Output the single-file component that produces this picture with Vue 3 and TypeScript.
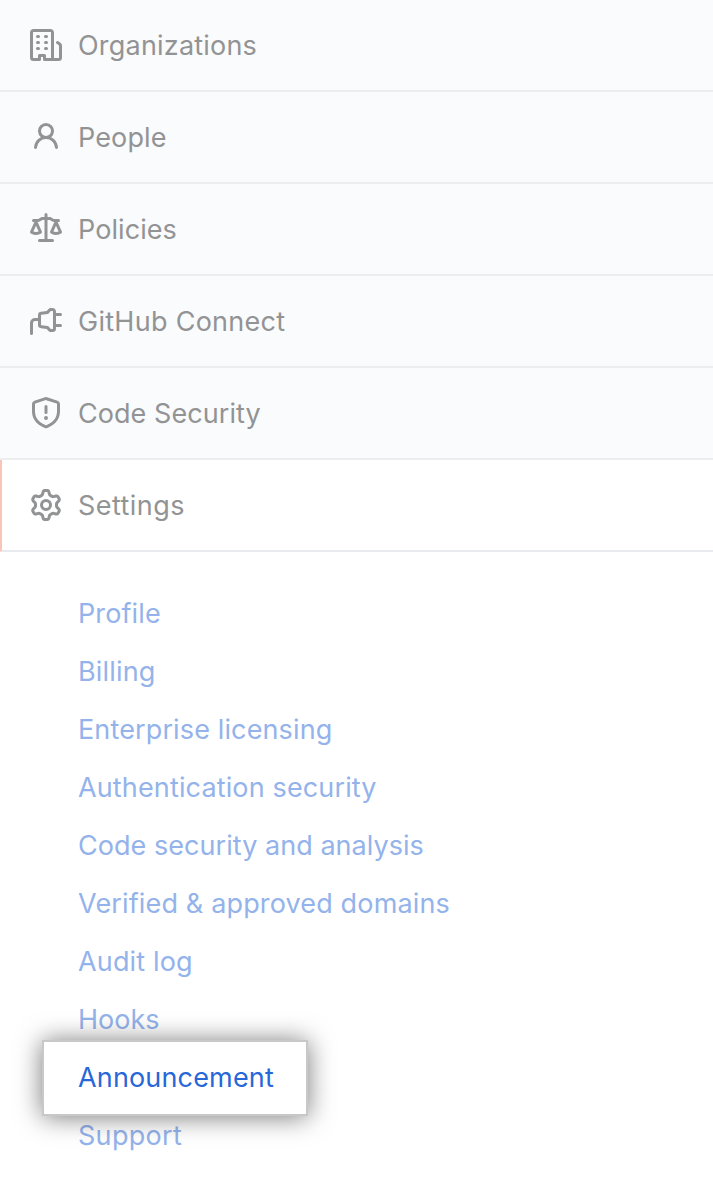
<script setup lang="ts">
interface NavItem {
  label: string
  icon: string
  tracking: number
  active?: boolean
}

interface SubItem {
  label: string
  tracking: number
  highlighted?: boolean
}

const items: NavItem[] = [
  {
    label: 'Organizations',
    tracking: 0.2,
    icon: 'M1.75 16A1.75 1.75 0 0 1 0 14.25V1.75C0 .784.784 0 1.75 0h8.5C11.216 0 12 .784 12 1.75v12.5c0 .085-.006.168-.018.25h2.268a.25.25 0 0 0 .25-.25V8.285a.25.25 0 0 0-.111-.208l-1.055-.703a.749.749 0 1 1 .832-1.248l1.055.703c.487.325.779.871.779 1.456v5.965A1.75 1.75 0 0 1 14.25 16h-3.5a.766.766 0 0 1-.197-.026c-.099.017-.2.026-.303.026h-3a.75.75 0 0 1-.75-.75V14h-1v1.25a.75.75 0 0 1-.75.75Zm-.25-1.75c0 .138.112.25.25.25H4v-1.25a.75.75 0 0 1 .75-.75h2.5a.75.75 0 0 1 .75.75v1.25h2.25a.25.25 0 0 0 .25-.25V1.75a.25.25 0 0 0-.25-.25h-8.5a.25.25 0 0 0-.25.25ZM3.75 6h.5a.75.75 0 0 1 0 1.5h-.5a.75.75 0 0 1 0-1.5ZM3 3.75A.75.75 0 0 1 3.75 3h.5a.75.75 0 0 1 0 1.5h-.5A.75.75 0 0 1 3 3.75Zm4 3A.75.75 0 0 1 7.75 6h.5a.75.75 0 0 1 0 1.5h-.5A.75.75 0 0 1 7 6.75ZM7.75 3h.5a.75.75 0 0 1 0 1.5h-.5a.75.75 0 0 1 0-1.5ZM3 9.75A.75.75 0 0 1 3.75 9h.5a.75.75 0 0 1 0 1.5h-.5A.75.75 0 0 1 3 9.75ZM7.75 9h.5a.75.75 0 0 1 0 1.5h-.5a.75.75 0 0 1 0-1.5Z',
  },
  {
    label: 'People',
    tracking: 0.12,
    icon: 'M10.561 8.073a6.005 6.005 0 0 1 3.432 5.142.75.75 0 1 1-1.498.07 4.5 4.5 0 0 0-8.99 0 .75.75 0 0 1-1.498-.07 6.004 6.004 0 0 1 3.431-5.142 3.999 3.999 0 1 1 5.123 0ZM10.5 5a2.5 2.5 0 1 0-5 0 2.5 2.5 0 0 0 5 0Z',
  },
  {
    label: 'Policies',
    tracking: 0.07,
    icon: 'M8.75.75V2h.985c.304 0 .603.08.867.231l1.29.736c.038.022.08.033.124.033h2.234a.75.75 0 0 1 0 1.5h-.427l2.111 4.692a.75.75 0 0 1-.154.838l-.53-.53.529.531-.001.002-.002.002-.006.006-.006.005-.01.01-.045.04c-.21.176-.441.327-.686.45C14.556 10.78 13.88 11 13 11a4.498 4.498 0 0 1-2.023-.454 3.544 3.544 0 0 1-.686-.45l-.045-.04-.016-.015-.006-.006-.004-.004v-.001a.75.75 0 0 1-.154-.838L12.178 4.5h-.162c-.305 0-.604-.079-.868-.231l-1.29-.736a.245.245 0 0 0-.124-.033H8.75V13h2.5a.75.75 0 0 1 0 1.5h-6.5a.75.75 0 0 1 0-1.5h2.5V3.5h-.984a.245.245 0 0 0-.124.033l-1.289.737c-.265.15-.564.23-.869.23h-.162l2.112 4.692a.75.75 0 0 1-.154.838l-.53-.53.529.531-.001.002-.002.002-.006.006-.016.015-.045.04c-.21.176-.441.327-.686.45C4.556 10.78 3.88 11 3 11a4.498 4.498 0 0 1-2.023-.454 3.544 3.544 0 0 1-.686-.45l-.045-.04-.016-.015-.006-.006-.004-.004v-.001a.75.75 0 0 1-.154-.838L2.178 4.5H1.75a.75.75 0 0 1 0-1.5h2.234a.249.249 0 0 0 .125-.033l1.288-.737c.265-.15.564-.23.869-.23h.984V.75a.75.75 0 0 1 1.5 0Zm2.945 8.477c.285.135.718.273 1.305.273s1.02-.138 1.305-.273L13 6.327Zm-10 0c.285.135.718.273 1.305.273s1.02-.138 1.305-.273L3 6.327Z',
  },
  {
    label: 'GitHub Connect',
    tracking: 0.28,
    icon: 'M4 8H2.5a1 1 0 0 0-1 1v5.25a.75.75 0 0 1-1.5 0V9a2.5 2.5 0 0 1 2.5-2.5H4V5.133a1.75 1.75 0 0 1 1.533-1.737l2.831-.353.76-.913c.332-.4.825-.63 1.344-.63h.782c.966 0 1.75.784 1.75 1.75V4h2.25a.75.75 0 0 1 0 1.5H13v4h2.25a.75.75 0 0 1 0 1.5H13v.75a1.75 1.75 0 0 1-1.75 1.75h-.782c-.519 0-1.012-.23-1.344-.63l-.761-.912-2.83-.354A1.75 1.75 0 0 1 4 9.867Zm6.276-4.91-.95 1.14a.753.753 0 0 1-.483.265l-3.124.39a.25.25 0 0 0-.219.248v4.734c0 .126.094.233.219.249l3.124.39a.752.752 0 0 1 .483.264l.95 1.14a.25.25 0 0 0 .192.09h.782a.25.25 0 0 0 .25-.25v-8.5a.25.25 0 0 0-.25-.25h-.782a.25.25 0 0 0-.192.09Z',
  },
  {
    label: 'Code Security',
    tracking: 0.06,
    icon: 'M7.467.133a1.748 1.748 0 0 1 1.066 0l5.25 1.68A1.75 1.75 0 0 1 15 3.48V7c0 1.566-.32 3.182-1.303 4.682-.983 1.498-2.585 2.813-5.032 3.855a1.697 1.697 0 0 1-1.33 0c-2.447-1.042-4.049-2.357-5.032-3.855C1.32 10.182 1 8.566 1 7V3.48a1.75 1.75 0 0 1 1.217-1.667Zm.61 1.429a.25.25 0 0 0-.153 0l-5.25 1.68a.25.25 0 0 0-.174.238V7c0 1.358.275 2.666 1.057 3.86.784 1.194 2.121 2.34 4.366 3.297a.196.196 0 0 0 .154 0c2.245-.956 3.582-2.104 4.366-3.298C13.225 9.666 13.5 8.36 13.5 7V3.48a.251.251 0 0 0-.174-.237l-5.25-1.68ZM8.75 4.75v3a.75.75 0 0 1-1.5 0v-3a.75.75 0 0 1 1.5 0ZM9 10.5a1 1 0 1 1-2 0 1 1 0 0 1 2 0Z',
  },
  {
    label: 'Settings',
    tracking: 0.45,
    active: true,
    icon: 'M8 0a8.2 8.2 0 0 1 .701.031C9.444.095 9.99.645 10.16 1.29l.288 1.107c.018.066.079.158.212.224.231.114.454.243.668.386.123.082.233.09.299.071l1.103-.303c.644-.176 1.392.021 1.82.63.27.385.506.792.704 1.218.315.675.111 1.422-.364 1.891l-.814.806c-.049.048-.098.147-.088.294.016.257.016.515 0 .772-.01.147.038.246.088.294l.814.806c.475.469.679 1.216.364 1.891a7.977 7.977 0 0 1-.704 1.217c-.428.61-1.176.807-1.82.63l-1.102-.302c-.067-.019-.177-.011-.3.071a5.909 5.909 0 0 1-.668.386c-.133.066-.194.158-.211.224l-.29 1.106c-.168.646-.715 1.196-1.458 1.26a8.006 8.006 0 0 1-1.402 0c-.743-.064-1.289-.614-1.458-1.26l-.289-1.106c-.018-.066-.079-.158-.212-.224a5.738 5.738 0 0 1-.668-.386c-.123-.082-.233-.09-.299-.071l-1.103.303c-.644.176-1.392-.021-1.82-.63a8.12 8.12 0 0 1-.704-1.218c-.315-.675-.111-1.422.363-1.891l.815-.806c.05-.048.098-.147.088-.294a6.214 6.214 0 0 1 0-.772c.01-.147-.038-.246-.088-.294l-.815-.806C.635 6.045.431 5.298.746 4.623a7.92 7.92 0 0 1 .704-1.217c.428-.61 1.176-.807 1.82-.63l1.102.302c.067.019.177.011.3-.071.214-.143.437-.272.668-.386.133-.066.194-.158.211-.224l.29-1.106C6.009.645 6.556.095 7.299.03 7.53.01 7.764 0 8 0Zm-.571 1.525c-.036.003-.108.036-.137.146l-.289 1.105c-.147.561-.549.967-.998 1.189-.173.086-.34.183-.5.29-.417.278-.97.423-1.529.27l-1.103-.303c-.109-.03-.175.016-.195.045-.22.312-.412.644-.573.99-.014.031-.021.11.059.19l.815.806c.411.406.562.957.53 1.456a4.709 4.709 0 0 0 0 .582c.032.499-.119 1.05-.53 1.456l-.815.806c-.081.08-.073.159-.059.19.162.346.353.677.573.989.02.03.085.076.195.046l1.102-.303c.56-.153 1.113-.008 1.53.27.161.107.328.204.501.29.447.222.85.629.997 1.189l.289 1.105c.029.109.101.143.137.146a6.6 6.6 0 0 0 1.142 0c.036-.003.108-.036.137-.146l.289-1.105c.147-.561.549-.967.998-1.189.173-.086.34-.183.5-.29.417-.278.97-.423 1.529-.27l1.103.303c.109.029.175-.016.195-.045.22-.313.411-.644.573-.99.014-.031.021-.11-.059-.19l-.815-.806c-.411-.406-.562-.957-.53-1.456a4.709 4.709 0 0 0 0-.582c-.032-.499.119-1.05.53-1.456l.815-.806c.081-.08.073-.159.059-.19a6.464 6.464 0 0 0-.573-.989c-.02-.03-.085-.076-.195-.046l-1.102.303c-.56.153-1.113.008-1.53-.27a4.44 4.44 0 0 0-.501-.29c-.447-.222-.85-.629-.997-1.189l-.289-1.105c-.029-.11-.101-.143-.137-.146a6.6 6.6 0 0 0-1.142 0ZM11 8a3 3 0 1 1-6 0 3 3 0 0 1 6 0ZM9.5 8a1.5 1.5 0 1 0-3.001.001A1.5 1.5 0 0 0 9.5 8Z',
  },
]

const subItems: SubItem[] = [
  { label: 'Profile', tracking: 0.12 },
  { label: 'Billing', tracking: 0.18 },
  { label: 'Enterprise licensing', tracking: 0.13 },
  { label: 'Authentication security', tracking: 0.14 },
  { label: 'Code security and analysis', tracking: 0.04 },
  { label: 'Verified & approved domains', tracking: 0.15 },
  { label: 'Audit log', tracking: 0.15 },
  { label: 'Hooks', tracking: 0 },
  { label: 'Announcement', tracking: 0.16, highlighted: true },
  { label: 'Support', tracking: 0.3 },
]
</script>

<template>
  <nav class="sidebar">
    <a v-for="item in items" :key="item.label" class="item" :class="{ active: item.active }">
      <svg class="icon" viewBox="0 0 16 16" aria-hidden="true"><path :d="item.icon" /></svg>
      <span class="label" :style="{ letterSpacing: item.tracking + 'px' }">{{ item.label }}</span>
    </a>
    <ul class="submenu">
      <li v-for="sub in subItems" :key="sub.label" class="sub" :class="{ highlighted: sub.highlighted }">
        <a class="label" :style="{ letterSpacing: sub.tracking + 'px' }">{{ sub.label }}</a>
      </li>
    </ul>
  </nav>
</template>

<style>
body {
  background: #fff;
}
</style>

<style scoped>
.sidebar {
  height: 1191px;
  overflow: hidden;
  background: #fff;
  font-family: Inter, 'Liberation Sans', sans-serif;
  font-size: 27px;
  line-height: 42px;
}
.item {
  display: flex;
  align-items: center;
  gap: 16px;
  box-sizing: border-box;
  height: 92px;
  padding-left: 30px;
  border-bottom: 2px solid #ebedef;
  background: #fafbfd;
  color: #929394;
}
.item .label {
  padding-top: 2px;
}
.item.active {
  padding-left: 28px;
  border-left: 2px solid #fac5b9;
  border-bottom-color: #e8eaed;
  background: #fff;
}
.icon {
  width: 32px;
  height: 32px;
  fill: currentColor;
}
.label {
  white-space: nowrap;
}
.submenu {
  display: flex;
  flex-direction: column;
  align-items: flex-start;
  margin: 0;
  padding: 33px 0 0 78px;
  list-style: none;
}
.sub {
  display: flex;
  align-items: center;
  height: 58px;
  color: #94b3eb;
}
.highlighted {
  z-index: 0;
  box-sizing: border-box;
  width: 266px;
  height: 76px;
  margin: -9px 0 -9px -36px;
  padding-left: 34px;
  border: 2px solid #c8c8c8;
  background: #fff;
  box-shadow: 0 1px 26px rgba(0, 0, 0, 0.53);
  color: #2767d8;
}
</style>
